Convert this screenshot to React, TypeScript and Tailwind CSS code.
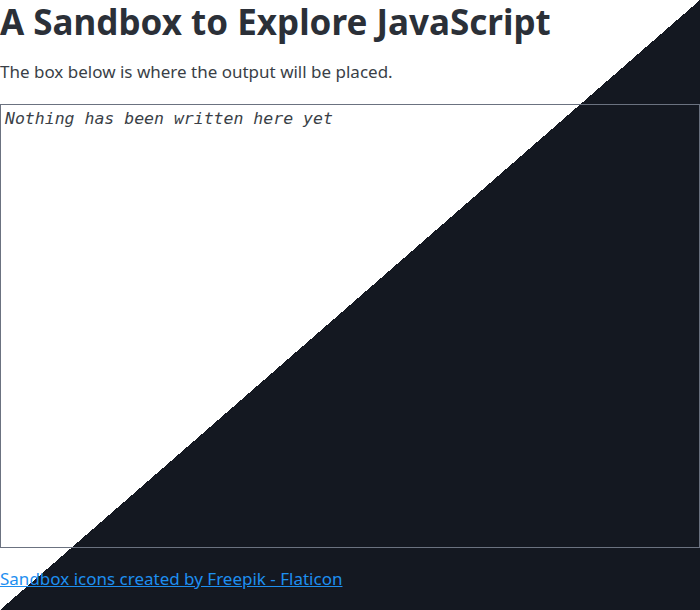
export default function App() {
  return (
    <div className="min-h-[610px] w-full bg-[linear-gradient(to_bottom_right,#ffffff_50%,#141821_50%)] font-['Noto_Sans',sans-serif]">
      <h1 className="m-0 text-[35px] font-bold leading-[44px] text-[#2b3038]">
        A Sandbox to Explore JavaScript
      </h1>
      <p className="mt-[14px] text-[17px] leading-[27px] text-[#3a3f47]">
        The box below is where the output will be placed.
      </p>
      <div className="mt-[19px] h-[444px] border border-[#6b7280] px-[4px] py-[2px]">
        <p className="font-['DejaVu_Sans_Mono',monospace] text-[16.5px] italic leading-[24px] text-[#3a3f47]">
          Nothing has been written here yet
        </p>
      </div>
      <p className="mt-[17px] text-[17px] leading-[27px]">
        <a href="#" className="text-[#1e8ff0] underline">
          Sandbox icons created by Freepik - Flaticon
        </a>
      </p>
    </div>
  );
}
